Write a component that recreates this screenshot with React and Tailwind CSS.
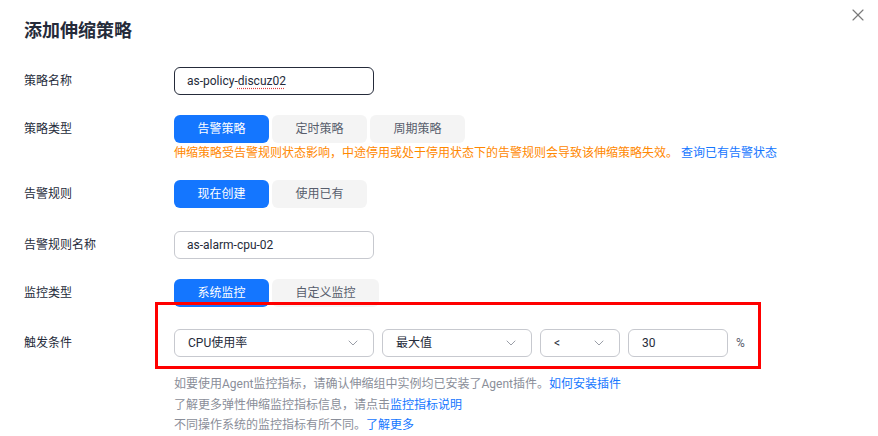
import { ChevronDown, X } from 'lucide-react'

const font = { fontFamily: 'Roboto, "Noto Sans CJK SC", sans-serif' }

function Label({ children }) {
  return <div className="w-[150px] shrink-0 text-[12px] text-[#252b3a]">{children}</div>
}

function Toggle({ items, active = 0, widths }) {
  return (
    <div className="flex gap-[3px]">
      {items.map((t, i) => (
        <div
          key={t}
          className={
            'h-[28px] flex items-center justify-center rounded-[6px] text-[12px] ' +
            (i === active ? 'bg-[#1476ff] text-white' : 'bg-[#f4f4f4] text-[#575d6c]')
          }
          style={{ width: widths[i] }}
        >
          {t}
        </div>
      ))}
    </div>
  )
}

function Select({ value, className }) {
  return (
    <div
      className={
        'h-[28px] flex items-center justify-between pl-[13px] pr-[12px] border border-[#c7c9cf] rounded-[6px] text-[12px] text-[#252b3a] ' +
        className
      }
    >
      <span>{value}</span>
      <ChevronDown size={16} strokeWidth={1.3} className="text-[#8a8e99]" />
    </div>
  )
}

export default function App() {
  return (
    <div className="relative w-[878px] h-[436px] bg-white overflow-hidden" style={font}>
      <X size={20} strokeWidth={1.4} className="absolute top-[5px] right-[10px] text-[#7a7a7a]" />

      {/* Title */}
      <div className="h-[60px] flex items-center pl-[24px]">
        <h1 className="text-[18px] font-bold text-[#252b3a]">添加伸缩策略</h1>
      </div>

      <div className="pl-[24px]">
        {/* 策略名称 */}
        <div className="mt-[7px] flex items-center">
          <Label>策略名称</Label>
          <div className="w-[200px] h-[28px] flex items-center px-[12px] border border-[#252b3a] rounded-[6px] text-[12px] text-[#252b3a]">
            as-policy-
            <span className="underline decoration-dotted decoration-[#e04040] underline-offset-[3px]">discuz02</span>
          </div>
        </div>

        {/* 策略类型 */}
        <div className="mt-[20px] flex items-center">
          <Label>策略类型</Label>
          <Toggle items={['告警策略', '定时策略', '周期策略']} widths={[95, 95, 95]} />
        </div>
        <div className="ml-[150px] h-[20px] flex items-center text-[12px] text-[#ff8800]">
          伸缩策略受告警规则状态影响，中途停用或处于停用状态下的告警规则会导致该伸缩策略失效。
          <span className="ml-[3px] text-[#1476ff]">查询已有告警状态</span>
        </div>

        {/* 告警规则 */}
        <div className="mt-[17px] flex items-center">
          <Label>告警规则</Label>
          <Toggle items={['现在创建', '使用已有']} widths={[95, 95]} />
        </div>

        {/* 告警规则名称 */}
        <div className="mt-[23px] flex items-center">
          <Label>告警规则名称</Label>
          <div className="w-[200px] h-[28px] flex items-center px-[12px] border border-[#c7c9cf] rounded-[6px] text-[12px] text-[#252b3a]">
            as-alarm-cpu-02
          </div>
        </div>

        {/* 监控类型 */}
        <div className="mt-[20px] flex items-center">
          <Label>监控类型</Label>
          <Toggle items={['系统监控', '自定义监控']} widths={[95, 107]} />
        </div>

        {/* 触发条件 */}
        <div className="mt-[22px] flex items-center">
          <Label>触发条件</Label>
          <div className="flex items-center gap-[8px]">
            <Select value="CPU使用率" className="w-[200px]" />
            <Select value="最大值" className="w-[150px]" />
            <Select value="<" className="w-[80px]" />
            <div className="w-[100px] h-[28px] flex items-center px-[13px] border border-[#c7c9cf] rounded-[6px] text-[12px] text-[#252b3a]">
              30
            </div>
            <span className="text-[12px] text-[#575d6c]">%</span>
          </div>
        </div>

        <div className="ml-[150px] mt-[17px] text-[12px] leading-[20.5px] text-[#8a8e99]">
          <div>
            如要使用Agent监控指标，请确认伸缩组中实例均已安装了Agent插件。
            <span className="text-[#1476ff]">如何安装插件</span>
          </div>
          <div>
            了解更多弹性伸缩监控指标信息，请点击<span className="text-[#1476ff]">监控指标说明</span>
          </div>
          <div>
            不同操作系统的监控指标有所不同。<span className="text-[#1476ff]">了解更多</span>
          </div>
        </div>
      </div>

      {/* annotation */}
      <div className="absolute left-[155px] top-[302px] w-[606px] h-[67px] border-[3px] border-[#ff0000]" />
    </div>
  )
}
